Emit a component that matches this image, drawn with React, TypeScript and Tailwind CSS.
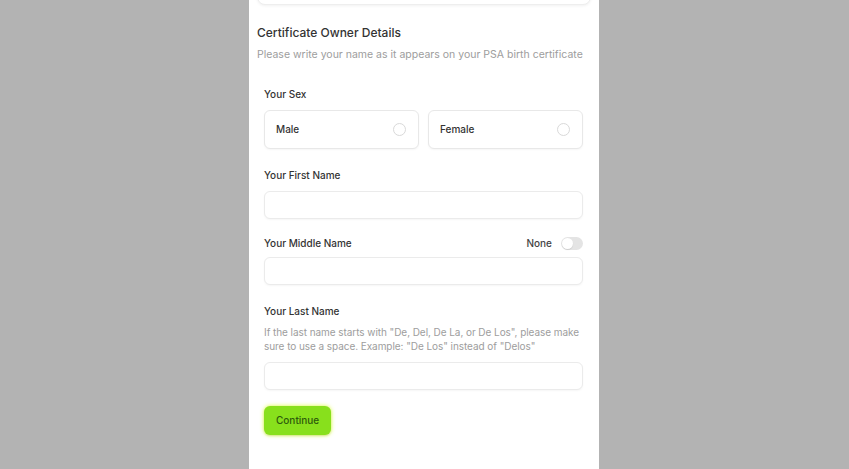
import React from "react";

function Radio({ label }: { label: string }) {
  return (
    <div className="flex h-[39px] flex-1 items-center justify-between rounded-[6px] border border-[#e8e8e8] bg-white pl-[11px] pr-[12px] shadow-[0_1px_2px_rgba(0,0,0,0.04)]">
      <span className="text-[10px] font-medium text-[#333]">{label}</span>
      <span className="h-[13px] w-[13px] rounded-full border border-[#d9d9d9] bg-white" />
    </div>
  );
}

function Input() {
  return (
    <div className="h-[28px] w-full rounded-[6px] border border-[#ebebeb] bg-white shadow-[0_1px_2px_rgba(0,0,0,0.04)]" />
  );
}

export default function App() {
  return (
    <div
      className="flex h-[469px] w-[849px] overflow-hidden bg-[#b3b3b3]"
      style={{ fontFamily: "Inter, 'Noto Sans', sans-serif" }}
    >
      <div className="ml-[249px] h-full w-[350px] bg-white px-[8px]">
        <div className="-mt-[20px] h-[25px] w-full rounded-[8px] border border-[#eeeeee] bg-white shadow-[0_1px_3px_rgba(0,0,0,0.06)]" />
        <div className="pt-[20px] text-[12px] font-medium leading-[16px] text-[#333]">
          Certificate Owner Details
        </div>
        <div className="pt-[7px] text-[10.5px] leading-[14px] text-[#9d9d9d]">
          Please write your name as it appears on your PSA birth certificate
        </div>
        <div className="pl-[7px] pr-[8px] pt-[25px]">
          <div className="text-[10px] font-medium leading-[14px] text-[#333]">Your Sex</div>
          <div className="mt-[9px] flex gap-[9px]">
            <Radio label="Male" />
            <Radio label="Female" />
          </div>
          <div className="mt-[19px] text-[10px] font-medium leading-[14px] text-[#333]">
            Your First Name
          </div>
          <div className="mt-[9px]">
            <Input />
          </div>
          <div className="mt-[17px] flex h-[14px] items-center justify-between">
            <span className="text-[10px] font-medium leading-[14px] text-[#333]">Your Middle Name</span>
            <div className="flex items-center gap-[9px]">
              <span className="text-[10px] font-medium text-[#444]">None</span>
              <span className="flex h-[13px] w-[22px] items-center rounded-full bg-[#e4e4e4] px-[1px]">
                <span className="h-[11px] w-[11px] rounded-full bg-white shadow-[0_1px_1px_rgba(0,0,0,0.1)]" />
              </span>
            </div>
          </div>
          <div className="mt-[7px]">
            <Input />
          </div>
          <div className="mt-[19px] text-[10px] font-medium leading-[14px] text-[#333]">
            Your Last Name
          </div>
          <div className="mt-[7px] text-[10px] leading-[14px] tracking-[-0.06px] text-[#9d9d9d]">
            If the last name starts with "De, Del, De La, or De Los", please make sure to use a space. Example: "De Los" instead of "Delos"
          </div>
          <div className="mt-[9px]">
            <Input />
          </div>
          <button className="mt-[16px] h-[29px] rounded-[6px] bg-[#88e01c] px-[12px] text-[10px] font-medium text-[#2e5a0c] shadow-[0_0_4px_rgba(210,255,0,0.8),0_1px_2px_rgba(0,0,0,0.15)]">
            Continue
          </button>
        </div>
      </div>
    </div>
  );
}
